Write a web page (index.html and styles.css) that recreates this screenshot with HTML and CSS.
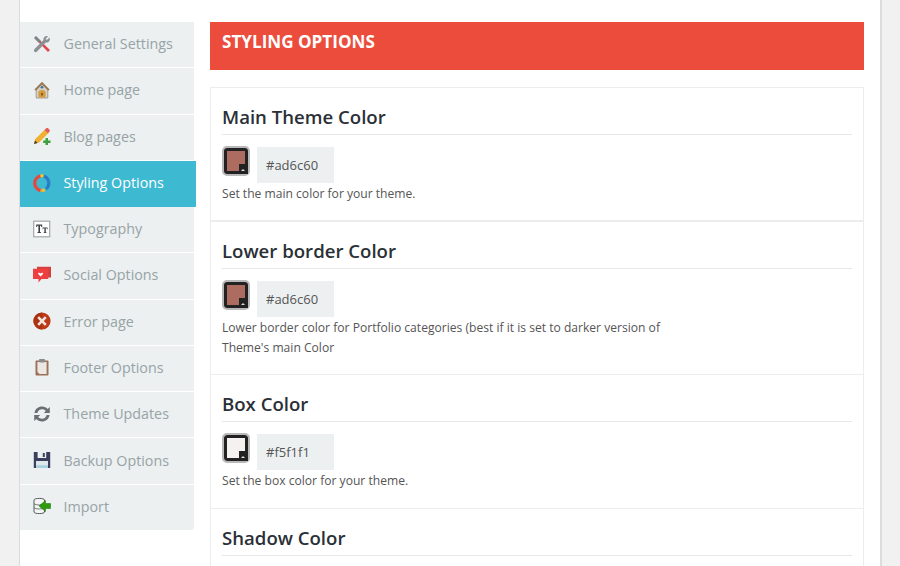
FILE: index.html
```html
<!DOCTYPE html>
<html lang="en">
<head>
<meta charset="utf-8">
<title>Styling Options</title>
<link rel="stylesheet" href="styles.css">
</head>
<body>
<div class="wrap">
  <nav class="side">
    <a class="item"><svg class="ico" viewBox="0 0 18 18"><path d="M3 1.5 L17 15 L15 17 L1.5 3 Z" fill="#e0474c"/><path d="M1 3 L3 1 L8 6 L6 8 Z" fill="#7d8486"/><path d="M16.5 2.5 L13.8 5 L12.6 4 L15 1.2 C12.5 0.3 10 2 10.5 5 L1.5 14 C0.8 15 0.8 16 1.5 16.7 C2.3 17.4 3.3 17.3 4 16.6 L12.8 7.6 C15.8 8 17.7 5.5 16.5 2.5 Z" fill="#8b9092"/></svg><span>General Settings</span></a>
    <a class="item"><svg class="ico" viewBox="0 0 18 18"><path d="M9 2.5 L3.2 8 V17 H14.8 V8 Z" fill="#d8d2c6" stroke="#8f8d86" stroke-width=".8"/><path d="M9 .8 L1.4 8.6 L2.8 9.8 L9 3.8 L15.2 9.8 L16.6 8.6 Z" fill="#9a7a52"/><path d="M5.4 16.6 V11 C5.4 8.2 12.6 8.2 12.6 11 V16.6 Z" fill="#d39a3f"/><circle cx="9" cy="6.3" r="1.3" fill="#2f6fb0"/><rect x="8.3" y="12" width="1.4" height="2.4" fill="#6a4413"/></svg><span>Home page</span></a>
    <a class="item"><svg class="ico" viewBox="0 0 18 18"><path d="M1 17 L2.2 12 L12 2.5 L15.5 6 L5.8 15.8 Z" fill="#f0b030"/><path d="M11.5 3 L13 1.4 C13.7.8 14.6.8 15.3 1.4 L16.3 2.5 C17 3.2 17 4 16.3 4.8 L15 6.3 Z" fill="#e45a5a"/><path d="M1 17 L2 13.4 L4.6 16 Z" fill="#3b3b3b"/><path d="M12.5 11 H15 V13.5 H17.5 V16 H15 V18 H12.5 V16 H10.2 V13.5 H12.5 Z" fill="#3d9f3d"/></svg><span>Blog pages</span></a>
    <a class="item active"><svg class="ico" viewBox="0 0 18 18"><path d="M7.5 1.8 A7.5 7.5 0 0 0 7.5 16.4" fill="none" stroke="#e5483e" stroke-width="3.4"/><path d="M7.5 16.4 A7.5 7.5 0 0 0 11 16.4" fill="none" stroke="#e5a13a" stroke-width="3.4"/><path d="M10.5 2 A7.5 7.5 0 0 1 13 15" fill="none" stroke="#2a7dc5" stroke-width="3.2"/><circle cx="9" cy="1.8" r="1.8" fill="#f0c530"/><circle cx="10.5" cy="16.2" r="1.6" fill="#f0c530"/></svg><span>Styling Options</span></a>
    <a class="item"><svg class="ico" viewBox="0 0 18 18"><rect x=".7" y="1.2" width="16" height="15.6" fill="#fff" stroke="#a3a7a8" stroke-width="1.2"/><path d="M3.2 4.6 H9.2 V7 H8.4 L8 5.8 H7 V12 H7.9 V13 H4.5 V12 H5.4 V5.8 H4.4 L4 7 H3.2 Z" fill="#3f4243"/><path d="M9.6 7.4 H14.6 V9.2 H14 L13.7 8.3 H12.8 V12.2 H13.5 V13 H10.7 V12.2 H11.4 V8.3 H10.5 L10.2 9.2 H9.6 Z" fill="#3f4243"/></svg><span>Typography</span></a>
    <a class="item"><svg class="ico" viewBox="0 0 18 18"><path d="M4 .8 H18 V11.5 H15 V3.5 H4 Z" fill="#d4403e"/><path d="M0 2.8 H15.2 V13 H8.5 L5.5 16.6 V13 H0 Z" fill="#ee4040"/><path d="M7.6 10.6 L5.2 8 C4.7 6.9 6.2 6 7.6 7.5 C9 6 10.5 6.9 10 8 Z" fill="#fff"/></svg><span>Social Options</span></a>
    <a class="item"><svg class="ico" viewBox="0 0 18 18"><circle cx="9" cy="9" r="8.6" fill="#bd3a17"/><path d="M9 .4 A8.6 8.6 0 0 0 .4 9 A8.6 8.6 0 0 0 9 17.6 Z" fill="#a93312"/><path d="M5.2 5.2 L12.8 12.8 M12.8 5.2 L5.2 12.8" stroke="#f5e4dc" stroke-width="2.6"/></svg><span>Error page</span></a>
    <a class="item"><svg class="ico" viewBox="0 0 18 18"><rect x="2.5" y="2.5" width="13" height="15" rx="1" fill="#9c6f57"/><path d="M4.4 4 H13.6 V16 H6.5 L4.4 14 Z" fill="#ebe8e3"/><rect x="6" y="1" width="6" height="3.4" rx=".8" fill="#8a8d8e"/></svg><span>Footer Options</span></a>
    <a class="item"><svg class="ico" viewBox="0 0 18 18"><path d="M1.5 8 C2 3.8 5.4 1.5 9 1.5 C11.5 1.5 13.4 2.6 14.7 4 L16.8 2 V8 H10.8 L12.8 6 C11.9 4.9 10.6 4.3 9 4.3 C6.7 4.3 4.8 5.8 4.4 8 Z" fill="#6a6f71"/><path d="M16.5 10 C16 14.2 12.6 16.5 9 16.5 C6.5 16.5 4.6 15.4 3.3 14 L1.2 16 V10 H7.2 L5.2 12 C6.1 13.1 7.4 13.7 9 13.7 C11.3 13.7 13.2 12.2 13.6 10 Z" fill="#6a6f71"/></svg><span>Theme Updates</span></a>
    <a class="item"><svg class="ico" viewBox="0 0 18 18"><path d="M.8 1 H17.2 V17 H.8 Z" fill="#3a3f5e"/><rect x="4.6" y="1" width="8.6" height="6" fill="#ecf0f1"/><rect x="9.8" y="2" width="2" height="4" fill="#3a3f5e"/><rect x="3" y="10" width="12" height="7" fill="#dfe8ea"/><rect x="3" y="14.2" width="12" height="2.8" fill="#a9d2e0"/></svg><span>Backup Options</span></a>
    <a class="item"><svg class="ico" viewBox="0 0 18 18"><path d="M1 3 C1 .9 11.5 .9 11.5 3 V15 C11.5 17.1 1 17.1 1 15 Z" fill="#f4f6f6" stroke="#55595a"/><path d="M1 6.8 C3 8.4 9.5 8.4 11.5 6.8 M1 10.8 C3 12.4 9.5 12.4 11.5 10.8" fill="none" stroke="#55595a" stroke-width=".8"/><path d="M17.5 6.5 H12.5 V3.5 L6 9 L12.5 14.5 V11.5 H17.5 Z" fill="#2f9a0c" stroke="#1b6d06" stroke-width=".5"/></svg><span>Import</span></a>
  </nav>
  <main class="main">
    <h1 class="banner">STYLING OPTIONS</h1>
    <div class="panel">
      <section class="opt">
        <h2 class="opt-title">Main Theme Color</h2>
        <div class="picker"><span class="swatch swatch-brown"></span><span class="hex">#ad6c60</span></div>
        <p class="desc">Set the main color for your theme.</p>
      </section>
      <section class="opt">
        <h2 class="opt-title">Lower border Color</h2>
        <div class="picker"><span class="swatch swatch-brown"></span><span class="hex">#ad6c60</span></div>
        <p class="desc">Lower border color for Portfolio categories (best if it is set to darker version of Theme's main Color</p>
      </section>
      <section class="opt">
        <h2 class="opt-title">Box Color</h2>
        <div class="picker"><span class="swatch swatch-light"></span><span class="hex">#f5f1f1</span></div>
        <p class="desc">Set the box color for your theme.</p>
      </section>
      <section class="opt">
        <h2 class="opt-title">Shadow Color</h2>
      </section>
    </div>
  </main>
</div>
</body>
</html>
```
FILE: styles.css
```css
* { box-sizing: border-box; }
html, body { margin: 0; height: 566px; overflow: hidden; }
body { background: #f1f1f1; font-family: "Open Sans", sans-serif; }
.wrap {
  width: 863px;
  height: 566px;
  margin-left: 19px;
  padding: 22px 17px 0 0;
  background: #fff;
  border-left: 1px solid #dcdcdc;
  border-right: 2px solid #dcdcdc;
  display: flex;
  gap: 14px;
  align-items: flex-start;
  overflow: hidden;
}
.side { width: 176px; flex: none; display: grid; grid-auto-rows: 46.28px; }
.item {
  width: 174px;
  display: flex;
  align-items: center;
  gap: 12.5px;
  padding: 0 0 2px 13px;
  background: #ecf0f1;
  border-bottom: 1.4px solid #fff;
  color: #97a3a6;
  font-size: 14.3px;
}
.item:last-child { height: 45.2px; border-bottom: 0; border-radius: 0 0 3px 0; }
.item.active { width: 176px; background: #3eb9d2; color: #fff; border-bottom: 0; }
.ico { width: 18px; height: 18px; flex: none; filter: blur(.25px); }
.main { width: 654px; flex: none; }
.banner {
  margin: 0;
  height: 48px;
  padding: 9px 12px 0;
  background: #ec4c3c;
  color: #fff;
  font-size: 17.1px;
  line-height: 22px;
  font-weight: 700;
}
.panel { margin-top: 17px; border: 1px solid #ededed; border-bottom: 0; }
.opt { padding: 15px 11px 16px; border-bottom: 1px solid #ededed; }
.opt:first-child { border-bottom-width: 2px; }
.opt:nth-child(3) { padding-bottom: 17px; }
.opt-title {
  margin: 0 0 12px;
  padding-bottom: 3px;
  border-bottom: 1px solid #e8e8e8;
  color: #2a3036;
  font-size: 18.6px;
  line-height: 28px;
  font-weight: 600;
}
.picker { display: flex; gap: 7px; height: 36px; }
.swatch {
  position: relative;
  width: 28px;
  height: 30px;
  margin-top: -1px;
  border: 2px solid #b9b9b9;
  border-radius: 5px;
  box-shadow: inset 0 0 0 3px #222;
}
.swatch-brown { background: #ad6c60; }
.swatch-light { background: #f5f1f1; }
.swatch::after {
  content: "";
  position: absolute;
  right: 0;
  bottom: 0;
  width: 9px;
  height: 10px;
  background: #222;
}
.swatch::before {
  content: "";
  position: absolute;
  z-index: 1;
  right: 3px;
  bottom: 3px;
  border: 2px solid transparent;
  border-top: 0;
  border-bottom: 2px solid #ddd;
}
.hex {
  width: 77px;
  padding-left: 9px;
  background: #ecf0f1;
  color: #555;
  font-size: 13px;
  line-height: 36px;
}
.desc {
  margin: 1px 0 0;
  max-width: 450px;
  color: #555;
  font-size: 12.1px;
  line-height: 20px;
}
```
